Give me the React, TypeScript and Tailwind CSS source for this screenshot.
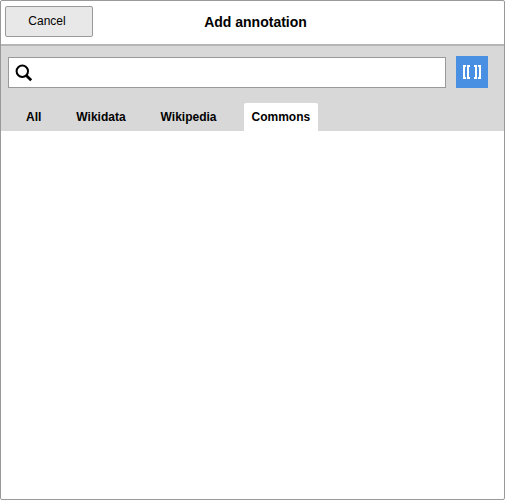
import { useState } from "react";

const tabs = ["All", "Wikidata", "Wikipedia", "Commons"];

function SearchIcon() {
  return (
    <svg
      className="pointer-events-none absolute top-[7px] left-[7px] size-[18px]"
      viewBox="0 0 18 18"
      fill="none"
      stroke="#000"
      aria-hidden="true"
    >
      <circle cx="7.3" cy="7.2" r="5.7" strokeWidth="2" />
      <path d="M11.3 11.5L16.2 16.2" strokeWidth="2.8" />
    </svg>
  );
}

function LinkBracketsIcon() {
  return (
    <svg className="size-8" viewBox="0 0 32 32" fill="#fff" aria-hidden="true">
      <path d="M7 9h3v2h-1v10h1v2h-3z" />
      <path d="M11 9h3v2h-1v10h1v2h-3z" />
      <path d="M21 9h-3v2h1v10h-1v2h3z" />
      <path d="M25 9h-3v2h1v10h-1v2h3z" />
    </svg>
  );
}

export default function App() {
  const [active, setActive] = useState("Commons");
  const [query, setQuery] = useState("");

  return (
    <div className="flex min-h-screen flex-col rounded-xs border border-[#999] bg-white font-['Liberation_Sans',Arial,sans-serif] text-black">
      <header className="grid grid-cols-[1fr_auto_1fr] items-center border-b-2 border-[#b5b5b5] px-1 pt-[5px] pb-[7px]">
        <button
          type="button"
          className="h-[31px] w-[88px] rounded-xs border border-[#999] bg-[#e8e8e8] pr-1 pb-0.5 text-xs"
        >
          Cancel
        </button>
        <h1 className="pl-1.5 text-sm font-bold">Add annotation</h1>
      </header>

      <section className="bg-[#d8d8d8]">
        <div className="flex items-end gap-2.5 pt-2.5 pr-4 pl-[7px]">
          <div className="relative flex-1">
            <SearchIcon />
            <input
              type="text"
              aria-label="Search"
              value={query}
              onChange={(e) => setQuery(e.target.value)}
              className="block h-[31px] w-full border border-[#999] bg-white pr-2 pl-8 text-sm outline-none"
            />
          </div>
          <button type="button" aria-label="Insert link" className="size-8 bg-[#4a90e2]">
            <LinkBracketsIcon />
          </button>
        </div>

        <div role="tablist" className="mt-[15px] flex gap-[19px] pl-[17px]">
          {tabs.map((tab) => (
            <button
              key={tab}
              type="button"
              role="tab"
              aria-selected={tab === active}
              onClick={() => setActive(tab)}
              className={`h-7 rounded-t-xs px-2 text-xs font-bold ${
                tab === active ? "bg-white" : "bg-transparent"
              }`}
            >
              {tab}
            </button>
          ))}
        </div>
      </section>

      <main className="flex-1" />
    </div>
  );
}
